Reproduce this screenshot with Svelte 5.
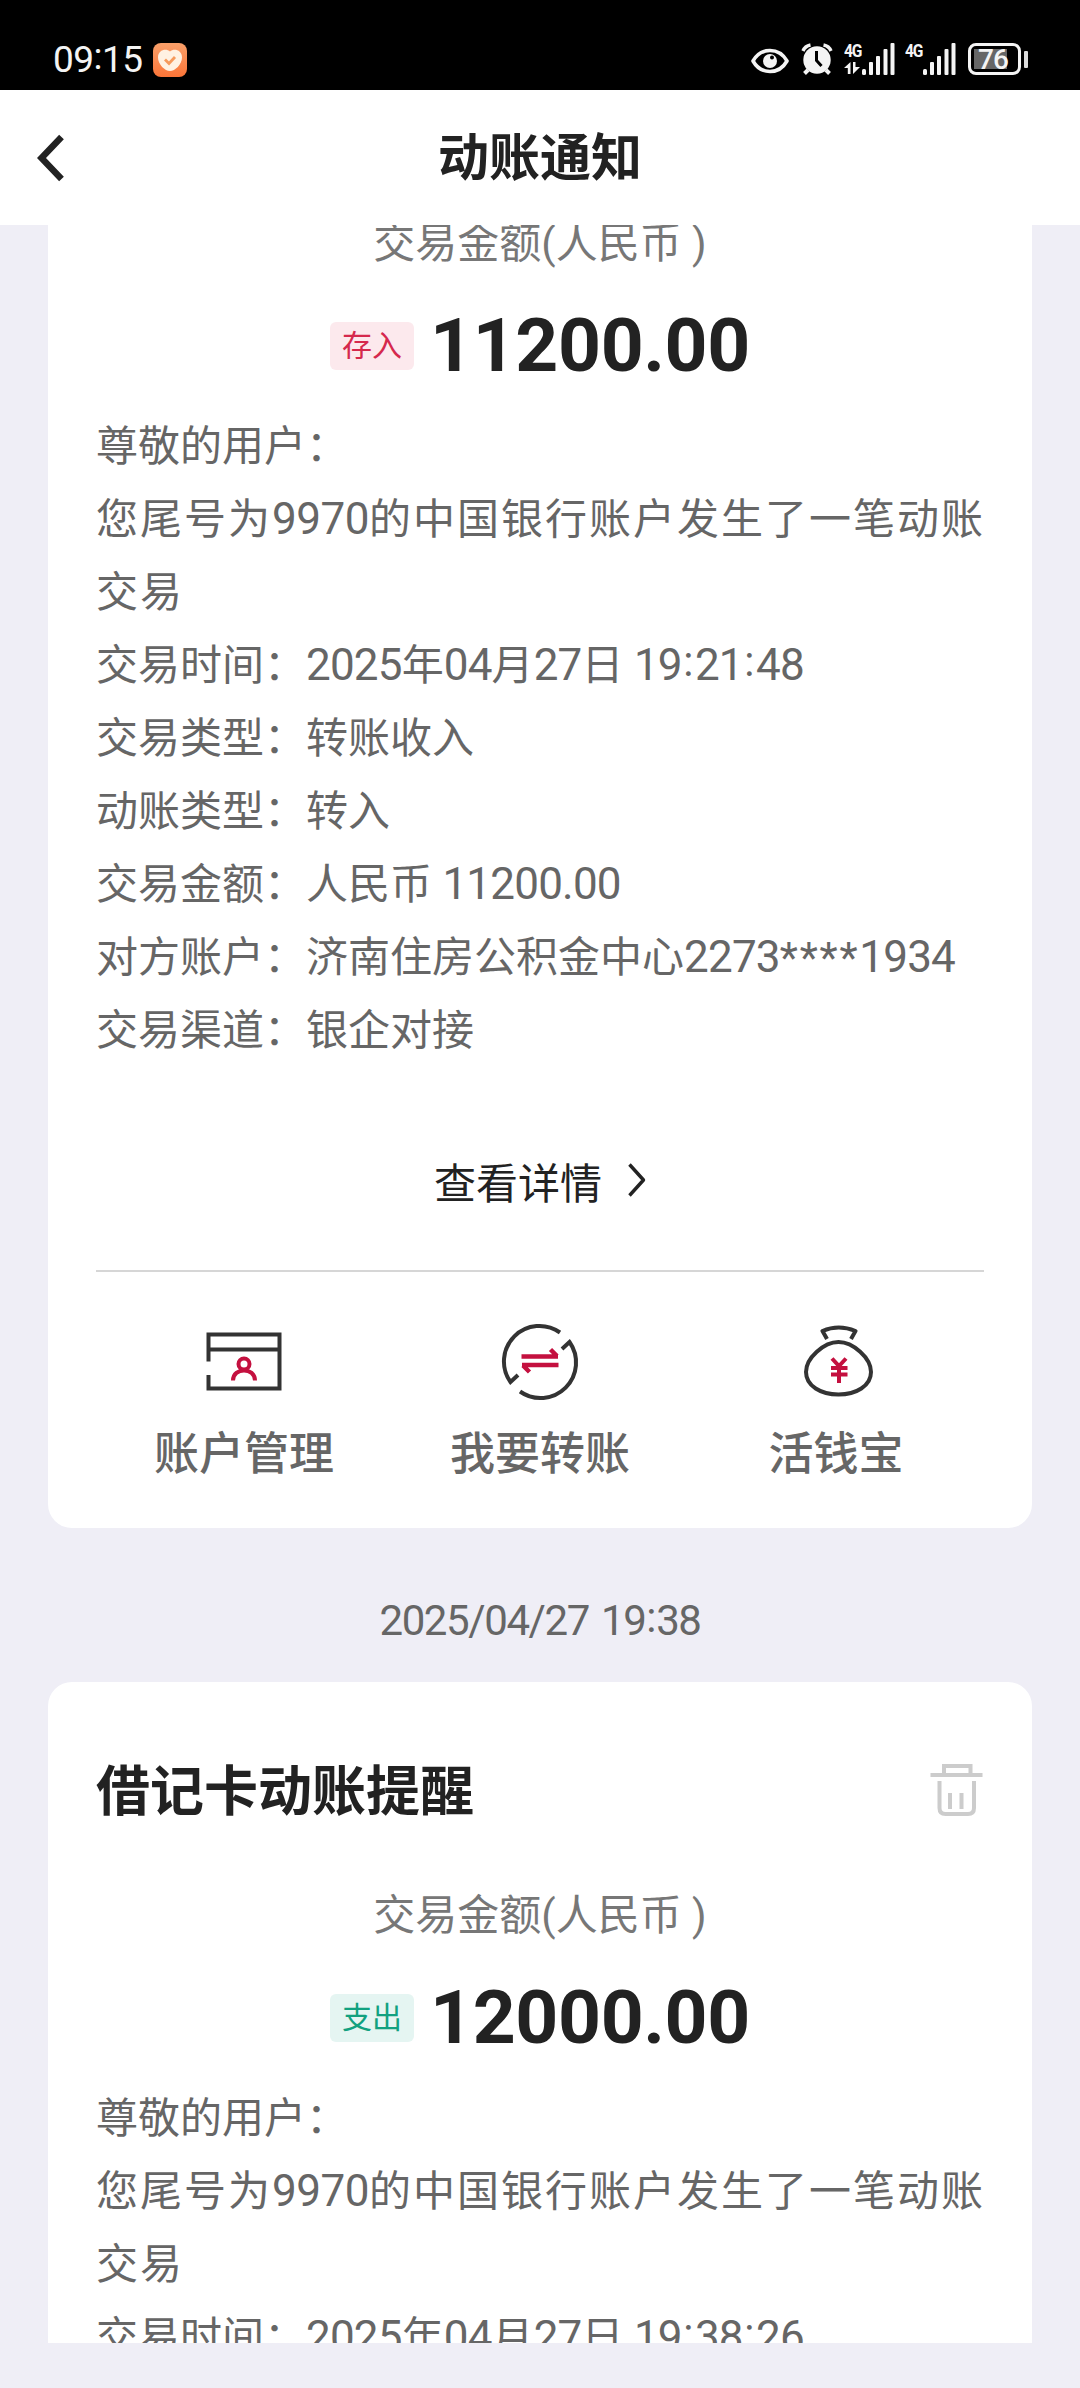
<script>
  const firstMessage = {
    kind: 'in',
    tag: '存入',
    amount: '11200.00',
    rows: [
      ['交易时间', '2025年04月27日 19:21:48'],
      ['交易类型', '转账收入'],
      ['动账类型', '转入'],
      ['交易金额', '人民币 11200.00'],
      ['对方账户', '济南住房公积金中心2273****1934'],
      ['交易渠道', '银企对接'],
    ],
  };

  const secondMessage = {
    kind: 'out',
    title: '借记卡动账提醒',
    tag: '支出',
    amount: '12000.00',
    rows: [['交易时间', '2025年04月27日 19:38:26']],
  };

  // digits, colons and stars get their own spans so they can be tuned apart from the hanzi
  function split(text) {
    return text.match(/[0-9./]+|:|\*+|[^0-9./:*]+/g).map((t) => ({
      t,
      cls: /^[0-9./]/.test(t) ? 'num' : t === ':' ? 'colon' : t[0] === '*' ? 'star' : 'han',
    }));
  }
</script>

{#snippet mixed(text)}
  {#each split(text) as part}<span class={part.cls}>{part.t}</span>{/each}
{/snippet}

{#snippet bars()}
  <svg class="bars" width="33" height="32" viewBox="0 0 33 32" fill="#f4f4f4">
    <rect x="0" y="26" width="4" height="6" rx="1.5" />
    <rect x="7" y="19" width="4" height="13" rx="1" />
    <rect x="14" y="13" width="4" height="19" rx="1" />
    <rect x="21.5" y="6" width="4" height="26" rx="1" />
    <rect x="28.5" y="0" width="4" height="32" rx="1" />
  </svg>
{/snippet}

{#snippet message(m)}
  <p class="label">交易金额(人民币 )</p>
  <div class="amount">
    <span class="tag {m.kind}">{m.tag}</span>
    <strong>{m.amount}</strong>
  </div>
  <div class="body">
    <p>尊敬的用户：</p>
    <p class="notice">您尾号为<span class="num">9970</span>的中国银行账户发生了一笔动账交易</p>
    {#each m.rows as [key, value]}
      <p class="row">{key}：{@render mixed(value)}</p>
    {/each}
  </div>
{/snippet}

<div class="screen">
  <div class="status">
    <span class="clock">09<span class="clock-colon">:</span>15</span>
    <svg class="health" width="34" height="34" viewBox="0 0 34 34">
      <defs>
        <linearGradient id="orange" x1="0" y1="0" x2="0" y2="1">
          <stop offset="0" stop-color="#f9a06a" />
          <stop offset="1" stop-color="#fb7538" />
        </linearGradient>
      </defs>
      <rect width="34" height="34" rx="8" fill="url(#orange)" />
      <path d="M17 8.5C13 5 5 7 5 14.500C5 21.500 12 28 17 28C22 28 29 21.500 29 14.500C29 7 21 5 17 8.500Z" fill="#fff1e2" />
      <path d="M12 16.500L16 20.500L22 14" fill="none" stroke="#f69a5c" stroke-width="2.800" />
    </svg>

    <div class="indicators">
      <svg class="eye" width="38" height="26" viewBox="0 0 38 26">
        <path d="M2 13C10 -1 28 -1 36 13C28 27 10 27 2 13Z" fill="none" stroke="#f4f4f4" stroke-width="3.600" stroke-linejoin="round" />
        <circle cx="19" cy="13" r="7" fill="#f4f4f4" />
        <circle cx="21" cy="9.500" r="2" fill="#000" />
      </svg>
      <svg class="alarm" width="32" height="32" viewBox="0 0 32 32">
        <circle cx="16" cy="17" r="13.700" fill="#f4f4f4" />
        <path d="M2 8Q4 3 9.500 2M30 8Q28 3 22.500 2" fill="none" stroke="#f4f4f4" stroke-width="3.400" />
        <path d="M7 27L3.500 30.500M25 27L28.500 30.500" stroke="#f4f4f4" stroke-width="4" />
        <path d="M15.500 8V17.500L20.500 23" fill="none" stroke="#000" stroke-width="3" />
      </svg>
      <div class="signal">
        <div class="net">
          <span>4G</span>
          <svg width="17" height="12" viewBox="0 0 17 12" fill="#f4f4f4">
            <path d="M0 6L6.500 0V12H3.800V6ZM9 0H11.500V5H16L9 12Z" />
          </svg>
        </div>
        {@render bars()}
      </div>
      <div class="signal second">
        <div class="net"><span>4G</span></div>
        {@render bars()}
      </div>
      <div class="battery"><span>76</span></div>
      <i class="nub"></i>
    </div>
  </div>

  <header>
    <svg width="28" height="48" viewBox="0 0 28 48">
      <path d="M24.500 3L4.500 24L24.500 45" fill="none" stroke="#222" stroke-width="6.500" />
    </svg>
    <h1>动账通知</h1>
  </header>

  <main>
    <section class="card first">
      {@render message(firstMessage)}
      <div class="detail">
        <span>查看详情</span>
        <svg width="18" height="34" viewBox="0 0 18 34">
          <path d="M1.500 1.500L15.500 17L1.500 32.500" fill="none" stroke="#222" stroke-width="3.400" stroke-linejoin="round" />
        </svg>
      </div>
      <nav>
        <div class="action">
          <svg width="80" height="80" viewBox="0 0 80 80" fill="none" stroke="#333" stroke-width="4">
            <path d="M4.500 39.500V12.500H75.500V66.500H4.500V53M4.500 27.500H75.500" />
            <g stroke="#c4103f">
              <circle cx="40" cy="42" r="5.500" />
              <path d="M29 58.500C29 45 51 45 51 58.500" />
            </g>
          </svg>
          <span>账户管理</span>
        </div>
        <div class="action">
          <svg width="80" height="80" viewBox="0 0 80 80" fill="none" stroke="#333" stroke-width="4">
            <path d="M60 10.500A35.500 35.500 0 0 0 10.500 60L18 53" />
            <path d="M20 69.500A35.500 35.500 0 0 0 69.500 20L62 27" />
            <path d="M21.500 34.500H58M50.500 27.500L57 34M58.500 43H22M29.500 50L23 43.500" stroke="#c4103f" stroke-width="4.500" />
          </svg>
          <span>我要转账</span>
        </div>
        <div class="action">
          <svg width="80" height="80" viewBox="0 0 80 80" fill="none" stroke="#333" stroke-width="4">
            <path d="M31 17L26.500 9Q42.500 2 59.500 9L55 17" stroke-linejoin="round" />
            <path d="M42.500 20C57 20 75 36 75 50C75 64 60 72.500 42.500 72.500C25 72.500 10 64 10 50C10 36 28 20 42.500 20Z" />
            <path d="M36 36.500L43 44L50 36.500M43 43V61M35 46H51.500M35 52.500H51.500" stroke="#c4103f" />
          </svg>
          <span>活钱宝</span>
        </div>
      </nav>
    </section>

    <time>2025/04/27 19<i>:</i>38</time>

    <section class="card">
      <div class="card-head">
        <h2>{secondMessage.title}</h2>
        <svg width="54" height="54" viewBox="0 0 54 54" fill="none" stroke="#ccc" stroke-width="4">
          <path d="M0.500 12H52.500M14 12V3H40.500V12M9.500 18V45Q9.500 51 15.500 51H38Q44 51 44 45V18M20 30V46M31.500 30V46" />
        </svg>
      </div>
      {@render message(secondMessage)}
    </section>
  </main>
</div>

<style>
  :global(body) {
    margin: 0;
    background: #efeef6;
  }

  .screen {
    width: 1080px;
    height: 2388px;
    display: flex;
    flex-direction: column;
    overflow: hidden;
    background: #efeef6;
    font-family: Roboto, 'Noto Sans CJK SC', sans-serif;
    color: #666;
  }

  h1, h2, p {
    margin: 0;
  }

  svg {
    display: block;
    flex: none;
  }

  .status {
    height: 90px;
    flex: none;
    box-sizing: border-box;
    display: flex;
    align-items: flex-start;
    padding: 43px 52px 0 53px;
    background: #000;
    color: #f4f4f4;
  }

  .clock {
    width: 100px;
    font-size: 37px;
    line-height: 34px;
    letter-spacing: -0.5px;
    white-space: nowrap;
  }

  .clock-colon {
    line-height: 0;
    vertical-align: 3px;
  }

  .indicators {
    display: flex;
    margin-left: auto;
  }

  .eye {
    margin: 5px 12px 0 0;
  }

  .signal {
    display: flex;
    margin-left: 11px;
  }

  .net {
    width: 18px;
    font-size: 19px;
    font-weight: 700;
    line-height: 15px;
    letter-spacing: -1.5px;
  }

  .net span {
    display: block;
    transform: scaleX(0.82);
    transform-origin: left;
  }

  .net svg {
    margin-top: 4px;
  }

  .signal.second {
    margin-left: 10px;
  }

  .battery {
    width: 53px;
    height: 32px;
    box-sizing: border-box;
    margin-left: 12px;
    border: 3px solid #f4f4f4;
    border-radius: 8px;
    background: linear-gradient(#666, #666) 3px 3px / 33px 20px no-repeat;
    font-size: 28px;
    font-weight: 500;
    line-height: 27px;
    text-align: center;
    letter-spacing: -1px;
  }

  .battery span {
    margin-right: 3px;
  }

  .nub {
    width: 4px;
    height: 17px;
    margin: 8px 0 0 3px;
    border-radius: 1px;
    background: #ddd;
  }

  header {
    height: 135px;
    flex: none;
    display: grid;
    grid-template-columns: 28px 1fr 28px;
    align-items: center;
    padding: 0 37px;
    background: #fff;
  }

  h1 {
    padding-top: 3px;
    font-size: 51px;
    line-height: 60px;
    color: #222;
    text-align: center;
  }

  main {
    height: 2118px;
    flex: none;
    overflow: hidden;
    padding: 0 48px;
    box-sizing: border-box;
  }

  .card {
    height: 1518px;
    box-sizing: border-box;
    padding: 68px 48px 0;
    border-radius: 24px;
    background: #fff;
  }

  /* scrolled under the header */
  .card.first {
    height: 1312px;
    margin-top: -9px;
    padding-top: 0;
    border-radius: 0 0 24px 24px;
  }

  .card-head {
    height: 80px;
    display: flex;
    align-items: center;
    justify-content: space-between;
    margin-bottom: 58px;
  }

  h2 {
    padding-top: 5px;
    font-size: 54px;
    line-height: 80px;
    color: #222;
  }

  .label {
    font-size: 42px;
    line-height: 56px;
    color: #777;
    text-align: center;
  }

  .amount {
    height: 90px;
    display: flex;
    align-items: center;
    justify-content: center;
    margin: 28px 0 20px;
  }

  .amount strong {
    margin-left: 16px;
    font-size: 75px;
    line-height: 90px;
    letter-spacing: -0.4px;
    color: #222;
  }

  .tag {
    width: 84px;
    height: 48px;
    margin-top: 2px;
    border-radius: 6px;
    font-size: 30px;
    line-height: 47px;
    text-align: center;
  }

  .tag.in {
    background: #fce9ed;
    color: #d5294d;
  }

  .tag.out {
    background: #e5f5f2;
    color: #12a180;
  }

  .body {
    font-size: 42px;
    line-height: 73px;
  }

  .notice {
    letter-spacing: 2px;
    margin-right: -4px;
  }

  .row {
    white-space: nowrap;
  }

  .num {
    font-size: 44px;
    letter-spacing: -0.8px;
    line-height: 0;
  }

  .notice .num {
    letter-spacing: -0.5px;
  }

  .colon {
    padding: 0 1.5px;
    line-height: 0;
    vertical-align: 4px;
  }

  .star {
    line-height: 0;
    letter-spacing: 1.8px;
  }

  .detail {
    height: 96px;
    display: flex;
    align-items: center;
    justify-content: center;
    gap: 26px;
    margin-top: 65px;
    padding-bottom: 42px;
    border-bottom: 2px solid #d6d6d6;
    font-size: 42px;
    color: #222;
  }

  nav {
    display: grid;
    grid-template-columns: repeat(3, 1fr);
    padding-top: 50px;
  }

  .action {
    display: flex;
    flex-direction: column;
    align-items: center;
    font-size: 45px;
    font-weight: 500;
    line-height: 60px;
  }

  .action span {
    margin-top: 23px;
  }

  time {
    display: block;
    height: 154px;
    box-sizing: border-box;
    padding-top: 65px;
    font-size: 42px;
    line-height: 56px;
    letter-spacing: -1.4px;
    word-spacing: 3px;
    text-align: center;
  }

  time i {
    padding: 0 1px;
    font-style: normal;
    line-height: 0;
    vertical-align: 3px;
  }
</style>
